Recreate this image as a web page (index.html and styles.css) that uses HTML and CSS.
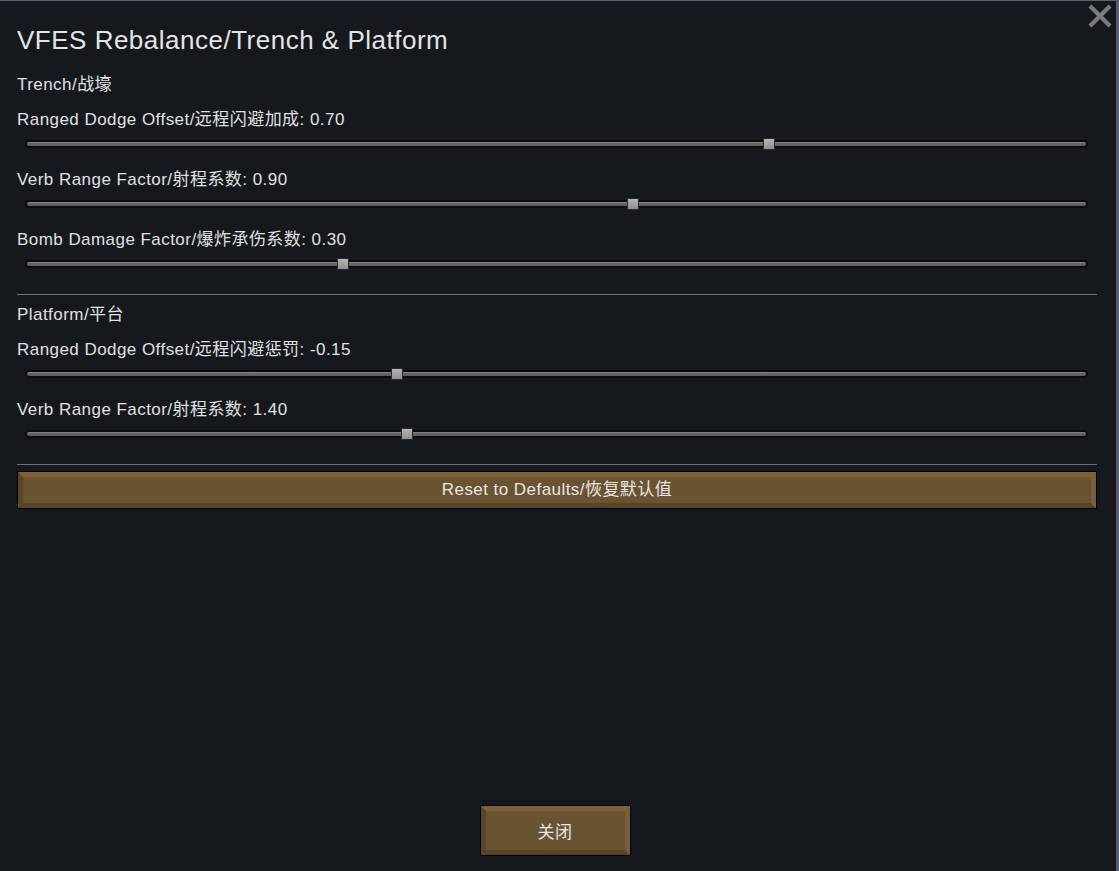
FILE: index.html
```html
<!DOCTYPE html>
<html lang="zh">
<head>
<meta charset="utf-8">
<title>VFES Rebalance/Trench &amp; Platform</title>
<link rel="stylesheet" href="styles.css">
</head>
<body>
<div class="window">
  <button class="close-x" aria-label="close">
    <svg width="24" height="24" viewBox="0 0 24 24"><path d="M2 2 L22 22 M22 2 L2 22" stroke="#7b7d80" stroke-width="4.2" stroke-linecap="butt"/></svg>
  </button>
  <div class="content">
    <h1 class="title">VFES Rebalance/Trench &amp; Platform</h1>

    <div class="section">
      <div class="header">Trench/战壕</div>
      <div class="setting">
        <div class="label">Ranged Dodge Offset/远程闪避加成: 0.70</div>
        <div class="slider"><div class="track"><div class="fill"></div></div><div class="handle" style="left: 738px"></div></div>
      </div>
      <div class="setting">
        <div class="label">Verb Range Factor/射程系数: 0.90</div>
        <div class="slider"><div class="track"><div class="fill"></div></div><div class="handle" style="left: 602px"></div></div>
      </div>
      <div class="setting">
        <div class="label">Bomb Damage Factor/爆炸承伤系数: 0.30</div>
        <div class="slider"><div class="track"><div class="fill"></div></div><div class="handle" style="left: 312px"></div></div>
      </div>
    </div>
    <hr class="sep">

    <div class="section">
      <div class="header platform">Platform/平台</div>
      <div class="setting">
        <div class="label">Ranged Dodge Offset/远程闪避惩罚: -0.15</div>
        <div class="slider"><div class="track"><div class="fill"></div></div><div class="handle" style="left: 366px"></div></div>
      </div>
      <div class="setting">
        <div class="label">Verb Range Factor/射程系数: 1.40</div>
        <div class="slider"><div class="track"><div class="fill"></div></div><div class="handle" style="left: 376px"></div></div>
      </div>
    </div>
    <hr class="sep">

    <button class="btn reset">Reset to Defaults/恢复默认值</button>
  </div>
  <div class="footer">
    <button class="btn close">关闭</button>
  </div>
</div>
</body>
</html>
```
FILE: styles.css
```css
* { box-sizing: border-box; }
html, body {
  margin: 0;
  padding: 0;
  background: #15191e;
}
body {
  font-family: "Liberation Sans", Arial, "Noto Sans CJK SC", sans-serif;
  color: #e0e0e0;
}
.window {
  position: relative;
  width: 1119px;
  height: 871px;
  background: #15191e;
  border-top: 1px solid #5a626c;
  border-right: 3px solid #56606b;
  display: flex;
  flex-direction: column;
}
.close-x {
  position: absolute;
  top: 3px;
  right: 4px;
  width: 24px;
  height: 24px;
  padding: 0;
  border: 0;
  background: none;
}
.close-x svg { display: block; }
.content {
  padding: 24px 19px 0 17px;
  display: flex;
  flex-direction: column;
}
.title {
  margin: 0;
  font-weight: normal;
  font-size: 26px;
  letter-spacing: 0.5px;
  line-height: 30px;
  height: 30px;
  color: #e4e4e4;
}
.section {
  display: flex;
  flex-direction: column;
  gap: 12px;
}
.header {
  margin-top: 18px;
  font-size: 17px;
  letter-spacing: 0.45px;
  line-height: 24px;
  height: 24px;
  margin-bottom: -1px;
}
.header.platform { margin-top: 8px; }
.label {
  font-size: 17px;
  letter-spacing: 0.45px;
  line-height: 24px;
  height: 24px;
}
.setting {
  display: flex;
  flex-direction: column;
}
.slider {
  position: relative;
  height: 24px;
  margin: 0 9px 0 8px;
}
.track {
  position: absolute;
  left: 0;
  right: 0;
  top: 8px;
  height: 8px;
  background: #0a0b0d;
  border-radius: 4px;
  padding: 2px 2px;
}
.fill {
  height: 4px;
  border-radius: 2px;
  background: linear-gradient(#828385 0, #828385 1px, #66676a 1px, #5c5d5f 100%);
}
.handle {
  position: absolute;
  top: 6px;
  width: 12px;
  height: 12px;
  background: linear-gradient(#b5b5b5, #8f8f8f);
  border: 1px solid #2c2c2c;
}
.sep {
  margin: 18px 0 0 0;
  border: 0;
  height: 1px;
  background: #6d7075;
}
.btn {
  font-family: "Liberation Sans", Arial, "Noto Sans CJK SC", sans-serif;
  font-size: 17px;
  letter-spacing: 0.45px;
  color: #e6e6e6;
  background: #6a5331;
  border-style: solid;
  border-width: 5px;
  border-color: #7d6137 #7a5e35 #584427 #5b4628;
  box-shadow: 0 0 0 1px #000;
  padding: 0;
  cursor: pointer;
}
.reset {
  margin: 7px 1px 0 1px;
  height: 36px;
  line-height: 26px;
}
.footer {
  margin-top: auto;
  padding-bottom: 16px;
  display: flex;
  justify-content: center;
}
.close {
  width: 149px;
  height: 49px;
  margin-right: 6px;
}
```
